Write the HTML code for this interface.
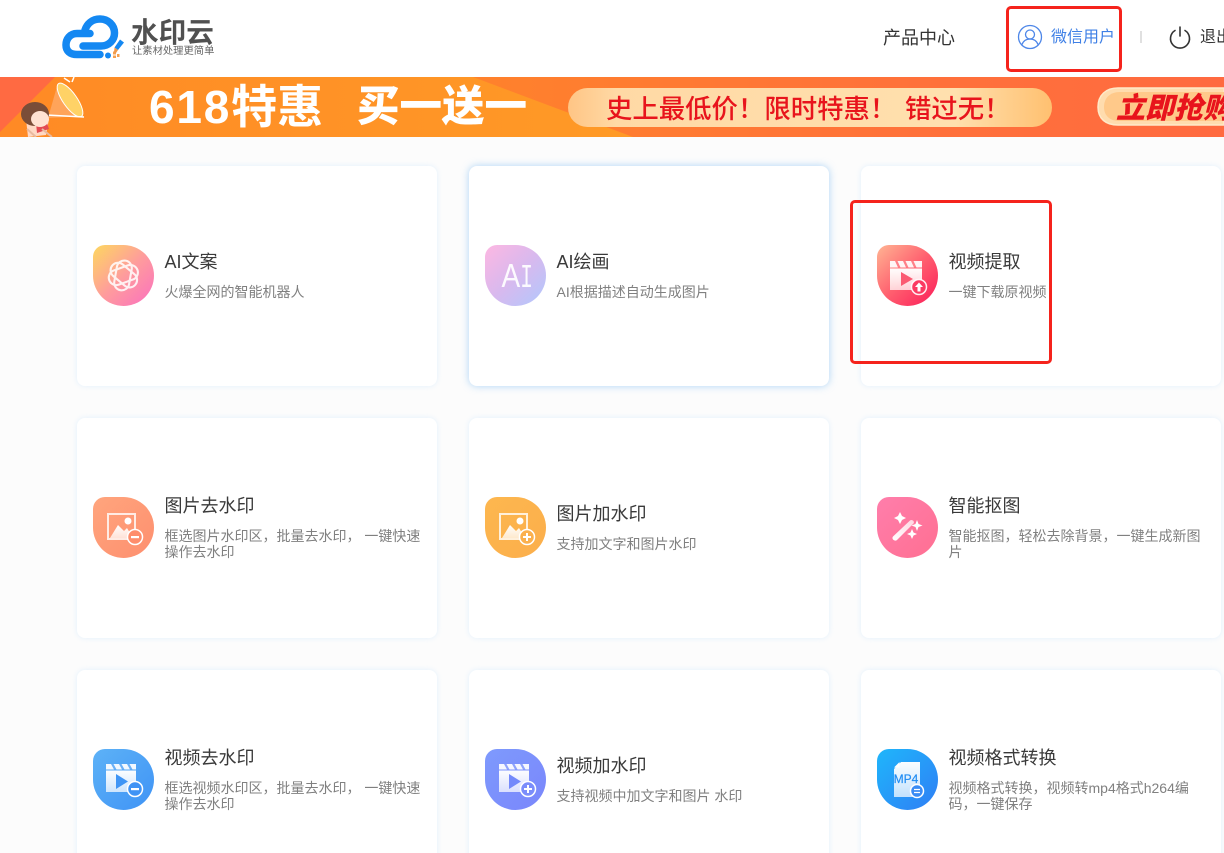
<!DOCTYPE html>
<html lang="zh-CN">
<head>
<meta charset="utf-8">
<title>水印云</title>
<style>
*{box-sizing:border-box;margin:0;padding:0}
html,body{width:1224px;height:853px;overflow:hidden;background:#fcfcfc;font-family:"Liberation Sans","Noto Sans CJK SC",sans-serif}
.a{position:absolute;white-space:nowrap}
#page{position:relative;width:1224px;height:853px;overflow:hidden}
.head{left:0;top:0;width:1224px;height:77px;background:#fff}
.card{position:absolute;width:360px;height:220px;background:#fff;border-radius:8px;box-shadow:0 0 6px rgba(190,225,255,.4)}
.card.hot{box-shadow:0 0 8px rgba(130,190,245,.65)}
.ic{position:absolute;left:16px;top:79px;width:61px;height:61px;border-radius:12px 50% 50% 50%;overflow:hidden}
.ic svg{display:block;width:61px;height:61px}
.t{position:absolute;left:87.500px;top:83px;font-size:18px;line-height:26px;color:#3a3a3a;white-space:nowrap}
.d{position:absolute;left:87.500px;top:118px;width:262px;font-size:14px;line-height:16px;color:#808080}
.two .t{top:75px}
.two .d{top:110px}
.redbox{position:absolute;border:3px solid #f5231c;border-radius:5px}
</style>
</head>
<body>
<div id="page">
<div class="a head"></div>

<svg class="a" style="left:58px;top:10px" width="66" height="54" viewBox="58 10 66 54">
<g fill="none" stroke="#1488f2" stroke-width="7.500" stroke-linecap="round">
<path d="M83 46H101C109 46 114.500 40 114.500 33C114.500 25 108 19 100 19C92 19 87 24 85 30"/>
<path d="M90 33.500H77C70 33.500 66 39 66 45C66 51 70 54.500 77 54.500H100"/>
</g>
<circle cx="108" cy="55.500" r="3" fill="#1488f2"/>
<rect x="113" y="51.500" width="3" height="3" fill="#f5a050"/><rect x="117" y="54" width="2.500" height="3" fill="#f5a050"/><rect x="113" y="55.500" width="3" height="2.500" fill="#f5a050"/>
<path d="M120 39.500L124 42.500L118 50L114.500 47.500Z" fill="#1488f2"/>
<path d="M114.500 47.500L118 50L116 53L114 52.500Z" fill="#f0984a"/>
</svg>
<div class="a" style="left:131px;top:16px;font-size:27.600px;line-height:34px;font-weight:700;color:#505050">水印云</div>
<div class="a" style="left:132px;top:45px;font-size:10.300px;line-height:13px;color:#666">让素材处理更简单</div>

<div class="a" style="left:883px;top:25px;font-size:18px;line-height:26px;color:#333">产品中心</div>
<svg class="a" style="left:1017px;top:24px" width="26" height="26" viewBox="0 0 26 26" fill="none" stroke="#4d86e8" stroke-width="1.300">
<circle cx="13" cy="13" r="11.500"/><circle cx="13" cy="10.500" r="4.500"/><path d="M5 20.500C6.500 16.500 9.500 15 13 15C16.500 15 19.500 16.500 21 20.500"/>
</svg>
<div class="a" style="left:1051px;top:26px;font-size:16px;line-height:23px;color:#3f80e6">微信用户</div>
<div class="a" style="left:1140px;top:31px;width:2px;height:12px;background:#e0e0e0"></div>
<svg class="a" style="left:1168px;top:25px" width="24" height="24" viewBox="0 0 24 24" fill="none" stroke="#333" stroke-width="1.600" stroke-linecap="round">
<path d="M7 5.500A9.500 9.500 0 1 0 17 5.500"/><path d="M12 2V11"/>
</svg>
<div class="a" style="left:1200px;top:26px;font-size:16px;line-height:23px;color:#333">退出</div>
<div class="redbox" style="left:1006px;top:6px;width:116px;height:66px;border-width:3.500px"></div>

<svg class="a" style="left:0;top:77px" width="1224" height="60" viewBox="0 0 1224 60">
<defs>
<linearGradient id="bn" x1="0" x2="1" y1="0" y2="0"><stop offset="0" stop-color="#ff8a25"/><stop offset=".4" stop-color="#ff812c"/><stop offset=".75" stop-color="#ff713a"/><stop offset="1" stop-color="#ff6a40"/></linearGradient>
<linearGradient id="lo" x1="0" x2="1" y1="0" y2="0"><stop offset="0" stop-color="#ff8a25"/><stop offset="1" stop-color="#ff9a26"/></linearGradient>
<linearGradient id="pl" x1="0" x2="1" y1="0" y2="0"><stop offset="0" stop-color="#ffc585"/><stop offset=".1" stop-color="#ffd9a5"/><stop offset=".8" stop-color="#ffe0ae"/><stop offset="1" stop-color="#ffc070"/></linearGradient>
</defs>
<rect width="1224" height="60" fill="url(#bn)"/>
<path d="M0 0H473L633 60H0Z" fill="url(#lo)"/>
<path d="M0 0H55L0 55Z" fill="#ff6a42"/>
<path d="M58 6L83 39L48 41Z" fill="#ffa45a"/>
<ellipse cx="70" cy="23" rx="7" ry="20" transform="rotate(-35 70 23)" fill="#ffd266" stroke="#fff" stroke-width="1"/>
<path d="M46 38L84 40" stroke="#fff" stroke-width="1.500"/>
<path d="M72 5L74 0M70 5L64 1" stroke="#fff" stroke-width="1.500"/>
<path d="M26 42L49 42L46 58L28 60Z" fill="#ffd8c4"/>
<path d="M36 46L46 43L49 52L37 56Z" fill="#e34a52"/>
<ellipse cx="35" cy="37" rx="14" ry="12" fill="#7a4d38"/>
<ellipse cx="40" cy="42" rx="9" ry="8" fill="#ffe2d2"/>
<path d="M27 52L36 60M42 52L52 60" stroke="#e8baa0" stroke-width="2"/>
<rect x="568" y="11" width="484" height="39" rx="19.500" fill="url(#pl)"/>
<path d="M1098 30C1098 18 1106 11 1118 11H1224V48H1118C1106 48 1098 42 1098 30Z" fill="#ffdcae" stroke="#ffe9c8" stroke-width="1.500"/>
<path d="M1104 30C1104 21 1110 15 1120 15H1224V44H1120C1110 44 1104 39 1104 30Z" fill="#ffc98a"/>
</svg>
<div class="a" style="left:149px;top:77px;font-size:46px;line-height:60px;font-weight:700;color:#fff"><span style="letter-spacing:1.800px">618</span>特惠</div>
<div class="a" style="left:357px;top:78px;font-size:42.500px;line-height:60px;font-weight:900;color:#fff">买一送一</div>
<div class="a" style="left:606px;top:91px;font-size:26.400px;line-height:36px;color:#e8141c;font-weight:500">史上最低价！限时特惠！</div>
<div class="a" style="left:905px;top:91px;font-size:26.400px;line-height:36px;color:#e8141c;font-weight:500">错过无！</div>
<div class="a" style="left:1116px;top:89px;font-size:29px;line-height:40px;color:#e8141c;font-weight:900;font-style:italic">立即抢购</div>

<svg width="0" height="0" style="position:absolute">
<defs><linearGradient id="wg" x1="0" x2="0" y1="0" y2="1"><stop offset="0" stop-color="#fff" stop-opacity=".98"/><stop offset="1" stop-color="#fff" stop-opacity=".72"/></linearGradient></defs>
</svg>

<div class="card" style="left:77px;top:166px">
<div class="ic" style="background:linear-gradient(135deg,#fdd85f 0%,#fe9c9c 50%,#fb6fc0 100%)">
<svg viewBox="0 0 61 61" fill="none" stroke="#fff" stroke-width="2.100" opacity=".85">
<rect x="22.500" y="15.500" width="15" height="30" rx="7.500" transform="rotate(10 30.500 30.500)"/>
<rect x="22.500" y="15.500" width="15" height="30" rx="7.500" transform="rotate(70 30.500 30.500)"/>
<rect x="22.500" y="15.500" width="15" height="30" rx="7.500" transform="rotate(130 30.500 30.500)"/>
</svg>
</div>
<div class="t">AI文案</div>
<div class="d">火爆全网的智能机器人</div>
</div>

<div class="card hot" style="left:469px;top:166px">
<div class="ic" style="background:linear-gradient(135deg,#fdb7e2 0%,#d8b9ee 50%,#b0c8fd 100%)">
<svg viewBox="0 0 61 61">
<text transform="translate(16.500 42) scale(.85 1)" font-family="'Liberation Sans',sans-serif" font-size="33" fill="#fff" fill-opacity=".92">A</text>
<text transform="translate(41.500 42) scale(.65 1)" text-anchor="middle" font-family="'Liberation Mono',monospace" font-size="33" fill="#fff" fill-opacity=".92">I</text>
</svg>
</div>
<div class="t">AI绘画</div>
<div class="d">AI根据描述自动生成图片</div>
</div>

<div class="card" style="left:861px;top:166px">
<div class="ic" style="background:linear-gradient(135deg,#ffb593 0%,#ff5f6f 50%,#fb1a58 100%)">
<svg viewBox="0 0 61 61">
<path d="M13 16H45V22.500H13Z" fill="#fff" fill-opacity=".92"/>
<path d="M18 16H20.500L23.500 22.500H21ZM26 16H28.500L31.500 22.500H29ZM34 16H36.500L39.500 22.500H37Z" fill="#ff8088"/>
<rect x="13" y="23.500" width="32" height="21.500" fill="url(#wg)"/>
<path d="M24 27L36 34L24 41Z" fill="#fb5a72"/>
<circle cx="42" cy="42" r="7.500" fill="#fb3a62" stroke="#fff" stroke-opacity=".9" stroke-width="1.500"/>
<path d="M42 37.500L46 42H43.500V46.500H40.500V42H38Z" fill="#fff"/>
</svg>
</div>
<div class="t">视频提取</div>
<div class="d">一键下载原视频</div>
</div>

<div class="card two" style="left:77px;top:418px">
<div class="ic" style="background:linear-gradient(135deg,#ffa57d,#fe8f6f)">
<svg viewBox="0 0 61 61">
<rect x="15" y="17" width="27" height="25" fill="none" stroke="#fff" stroke-opacity=".8" stroke-width="2"/>
<path d="M17 41L25 28L31 34L34 31L40 41Z" fill="url(#wg)"/>
<circle cx="35" cy="24" r="3.500" fill="#fff"/>
<circle cx="42" cy="40" r="7.500" fill="#fe8d6c" stroke="#fff" stroke-width="1.500"/>
<rect x="38" y="39" width="8" height="2.200" fill="#fff"/>
</svg>
</div>
<div class="t">图片去水印</div>
<div class="d">框选图片水印区，批量去水印， 一键快速操作去水印</div>
</div>

<div class="card" style="left:469px;top:418px">
<div class="ic" style="background:linear-gradient(135deg,#fdb74f,#fbae4b)">
<svg viewBox="0 0 61 61">
<rect x="15" y="17" width="27" height="25" fill="none" stroke="#fff" stroke-opacity=".8" stroke-width="2"/>
<path d="M17 41L25 28L31 34L34 31L40 41Z" fill="url(#wg)"/>
<circle cx="35" cy="24" r="3.500" fill="#fff"/>
<circle cx="42" cy="40" r="7.500" fill="#fbb04d" stroke="#fff" stroke-width="1.500"/>
<path d="M38 39H41V36H43V39H46V41H43V44H41V41H38Z" fill="#fff"/>
</svg>
</div>
<div class="t">图片加水印</div>
<div class="d">支持加文字和图片水印</div>
</div>

<div class="card two" style="left:861px;top:418px">
<div class="ic" style="background:linear-gradient(135deg,#ff7eab,#ff6f92)">
<svg viewBox="0 0 61 61">
<defs><linearGradient id="wand" x1="0" x2="1" y1="1" y2="0"><stop offset="0" stop-color="#fff"/><stop offset="1" stop-color="#fff" stop-opacity=".7"/></linearGradient></defs>
<path d="M16 39.500L33 23.500C35 22 38 24.500 36.500 26.500L20 43C18 45 14 42 16 39.500Z" fill="url(#wand)"/>
<path d="M23 15L25 19L29 21L25 23L23 27L21 23L17 21L21 19Z" fill="#fff"/>
<path d="M40 23L41.500 27L45.500 28.500L41.500 30L40 34L38.500 30L34.500 28.500L38.500 27Z" fill="#fff"/>
<path d="M35 32L36.500 35.500L40 37L36.500 38.500L35 42L33.500 38.500L30 37L33.500 35.500Z" fill="#fff"/>
</svg>
</div>
<div class="t">智能抠图</div>
<div class="d">智能抠图，轻松去除背景，一键生成新图片</div>
</div>

<div class="card two" style="left:77px;top:670px">
<div class="ic" style="background:linear-gradient(135deg,#5db2f7,#3f93f5)">
<svg viewBox="0 0 61 61">
<path d="M13 15H43V20.500H13Z" fill="#fff" fill-opacity=".92"/>
<path d="M18 15H20.500L23.500 20.500H21ZM26 15H28.500L31.500 20.500H29ZM34 15H36.500L39.500 20.500H37Z" fill="#6ab0f7"/>
<rect x="13" y="21.500" width="30" height="21.500" fill="url(#wg)"/>
<path d="M23 25L35 32.500L23 40Z" fill="#3f95f5"/>
<circle cx="42" cy="40" r="7.500" fill="#3f93f5" stroke="#fff" stroke-width="1.500"/>
<rect x="38" y="39" width="8" height="2.200" fill="#fff"/>
</svg>
</div>
<div class="t">视频去水印</div>
<div class="d">框选视频水印区，批量去水印， 一键快速操作去水印</div>
</div>

<div class="card" style="left:469px;top:670px">
<div class="ic" style="background:linear-gradient(135deg,#7e9afd,#7a86fb)">
<svg viewBox="0 0 61 61">
<path d="M14 15H44V20.500H14Z" fill="#fff" fill-opacity=".92"/>
<path d="M19 15H21.500L24.500 20.500H22ZM27 15H29.500L32.500 20.500H30ZM35 15H37.500L40.500 20.500H38Z" fill="#8ea2fc"/>
<rect x="14" y="21.500" width="30" height="21.500" fill="url(#wg)"/>
<path d="M24 25L36 32.500L24 40Z" fill="#7489fb"/>
<circle cx="43" cy="40" r="7.500" fill="#7b8dfb" stroke="#fff" stroke-width="1.500"/>
<path d="M39 39H42V36H44V39H47V41H44V44H42V41H39Z" fill="#fff"/>
</svg>
</div>
<div class="t">视频加水印</div>
<div class="d">支持视频中加文字和图片 水印</div>
</div>

<div class="card two" style="left:861px;top:670px">
<div class="ic" style="background:linear-gradient(135deg,#1fb6fb,#2f7ef5)">
<svg viewBox="0 0 61 61">
<path d="M24 13H43V48H17V20Z" fill="url(#wg)"/>
<path d="M17 18.500L22.500 13V18.500Z" fill="#fff"/>
<text x="29" y="34" text-anchor="middle" font-family="'Liberation Sans',sans-serif" font-size="12" stroke="#1f8cf3" stroke-width=".2" fill="#1f8cf3">MP4</text>
<circle cx="40" cy="42" r="6.500" fill="#3a8cf5" stroke="#fff" stroke-width="1.500"/>
<path d="M37 40.500H43M37 43.500H43" stroke="#fff" stroke-width="1.300"/>
</svg>
</div>
<div class="t">视频格式转换</div>
<div class="d">视频格式转换，视频转mp4格式h264编码，一键保存</div>
</div>

<div class="redbox" style="left:850px;top:200px;width:202px;height:164px"></div>
</div>
</body>
</html>
